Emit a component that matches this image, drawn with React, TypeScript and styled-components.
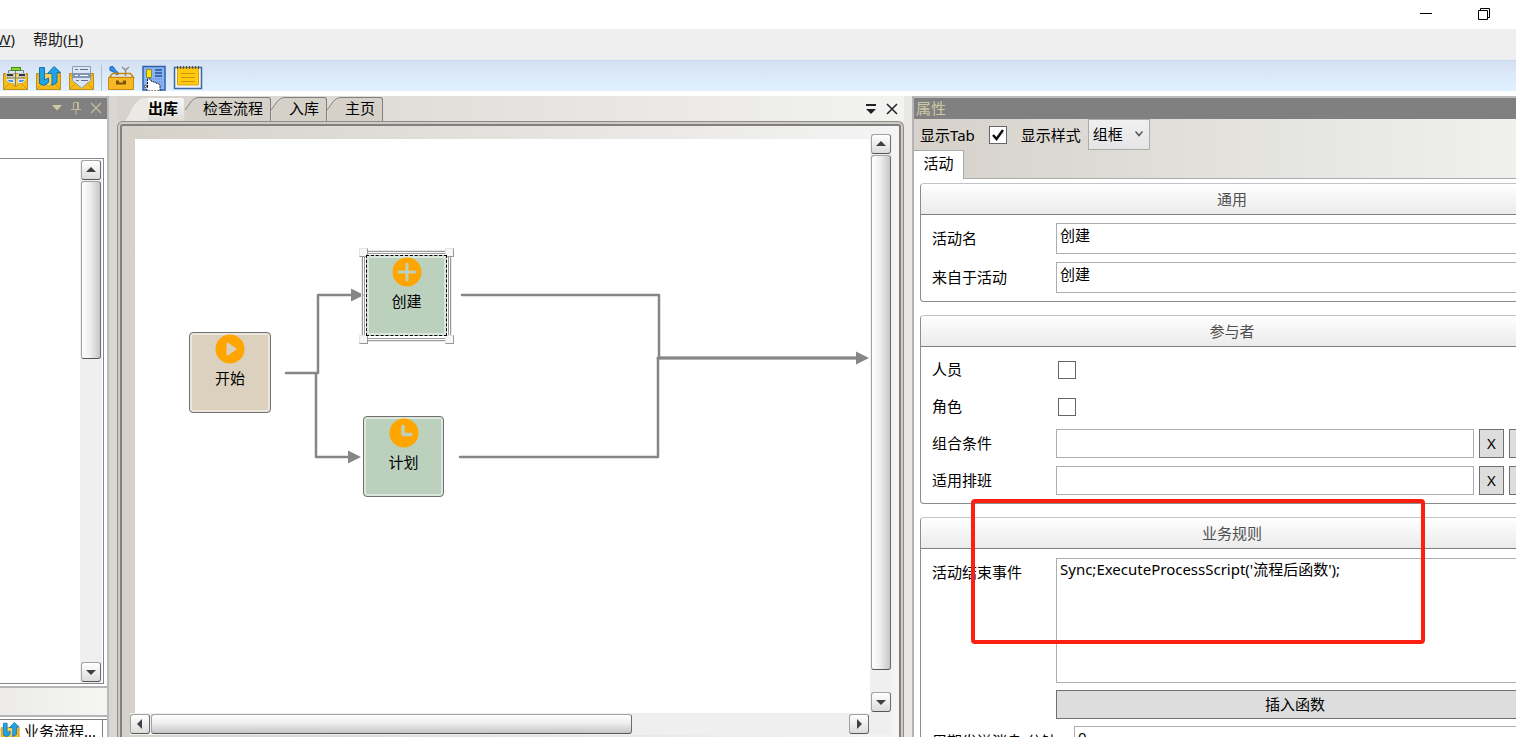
import React from "react";
import styled, { createGlobalStyle, css } from "styled-components";

const GlobalStyle = createGlobalStyle`
  * { box-sizing: border-box; }
  body { margin: 0; overflow: hidden; }
  body, button, input, select, textarea {
    font-family: "Noto Sans", "Noto Sans CJK SC", sans-serif;
    font-size: 15px;
    line-height: 20px;
    color: #000;
  }
`;

/* ---------- window frame ---------- */

const Window = styled.div`
  display: flex;
  flex-direction: column;
  height: 100vh;
  overflow: hidden;
  background: #fff;
  white-space: nowrap;
`;

const TitleBar = styled.header`
  display: flex;
  flex: none;
  justify-content: flex-end;
  gap: 34px;
  height: 29px;
  padding-right: 20px;
`;

const PlainButton = styled.button`
  display: flex;
  align-items: center;
  justify-content: center;
  padding: 0;
  border: 0;
  background: none;
`;

const WindowButton = styled(PlainButton)`
  width: 24px;
  height: 28px;
`;

const MenuBar = styled.nav`
  display: flex;
  flex: none;
  gap: 18px;
  height: 31px;
  background: #efefef;
`;

const MenuItem = styled(PlainButton)<{ $clipped?: boolean }>`
  justify-content: flex-end;
  width: ${(p) => (p.$clipped ? "15px" : "auto")};
  height: 20px;
  color: #222;
`;

const Toolbar = styled.div`
  display: flex;
  flex: none;
  align-items: flex-end;
  gap: 5px;
  height: 31px;
  padding-left: 2px;
  border-top: 1px solid #c6dcf5;
  background: linear-gradient(#d6e1f1, #e0f1ff);
`;

const ToolSeparator = styled.span`
  width: 1px;
  height: 26px;
  background: #b9bcc2;
`;

const Workspace = styled.main`
  display: flex;
  flex: 1;
  min-height: 0;
  margin-top: 5px;
  background: linear-gradient(90deg, #d5d1ca, #dad7d0 8%, #e8e7e4 60%, #f2f2f0);
`;

/* ---------- scroll bars ---------- */

type Axis = { $horizontal?: boolean };

const Track = styled.div<Axis>`
  display: flex;
  flex: none;
  flex-direction: ${(p) => (p.$horizontal ? "row" : "column")};
  padding: ${(p) => (p.$horizontal ? "1px 1px 1px 0" : "0 1px 1px 1px")};
  background: #efefef;
`;

const Groove = styled.div<Axis>`
  display: flex;
  flex: 1;
  min-width: 0;
  min-height: 0;
  flex-direction: ${(p) => (p.$horizontal ? "row" : "column")};
  padding: ${(p) => (p.$horizontal ? "0 1px" : "1px 0")};
`;

const edge = css`
  border: 1px solid;
  border-color: #a2a2a2 #6c6c6c #555 #a2a2a2;
  border-radius: 3px;
`;

const Thumb = styled.div<Axis & { $size: number }>`
  flex: 0 0 ${(p) => p.$size}%;
  ${edge}
  background: linear-gradient(${(p) => (p.$horizontal ? "180deg" : "90deg")}, #fff, #eee 45%, #c6c6c6);
`;

const ArrowButton = styled(PlainButton)`
  flex: none;
  width: 20px;
  height: 20px;
  ${edge}
  background: linear-gradient(#fff, #dcdcdc);
`;

const arrows = {
  up: "M0 7 L5 2 L10 7Z",
  down: "M0 3 L5 8 L10 3Z",
  left: "M7 0 L2 5 L7 10Z",
  right: "M3 0 L8 5 L3 10Z",
};

function ScrollArrow({ to, label }: { to: keyof typeof arrows; label: string }) {
  return (
    <ArrowButton aria-label={label}>
      <svg width="10" height="10"><path d={arrows[to]} fill="#404040" /></svg>
    </ArrowButton>
  );
}

function ScrollBar({ horizontal, size }: { horizontal?: boolean; size: number }) {
  return (
    <Track $horizontal={horizontal}>
      <ScrollArrow to={horizontal ? "left" : "up"} label={horizontal ? "向左" : "向上"} />
      <Groove $horizontal={horizontal}><Thumb $horizontal={horizontal} $size={size} /></Groove>
      <ScrollArrow to={horizontal ? "right" : "down"} label={horizontal ? "向右" : "向下"} />
    </Track>
  );
}

/* ---------- left dock ---------- */

const DockHeader = styled.div<{ $end?: boolean }>`
  display: flex;
  flex: none;
  align-items: center;
  justify-content: ${(p) => (p.$end ? "flex-end" : "flex-start")};
  gap: 8px;
  height: 23px;
  padding: 0 4px 2px 2px;
  border-top: 2px solid #bcbcbc;
  background: #808080;
  color: #cdc9a5;
`;

const LeftDock = styled.aside`
  display: flex;
  flex: none;
  flex-direction: column;
  width: 109px;
  border-right: 2px solid #b9babd;
  background: #fff;
`;

const TreeBox = styled.div`
  display: flex;
  flex: 1;
  justify-content: flex-end;
  min-height: 0;
  margin: 39px 3px 2px 0;
  padding: 1px 1px 0 0;
  border: 1px solid #828790;
  border-left: 0;
`;

const StatusStrip = styled.div`
  flex: none;
  height: 31px;
  border-top: 2px solid #b5b5b5;
  border-bottom: 2px solid #b5b5b5;
  background: linear-gradient(90deg, #ecebe9, #f5f5f4);
`;

const DockTabs = styled.div`
  flex: none;
  height: 18px;
  margin-top: 2px;
  overflow: hidden;
  border-top: 1px solid #808080;
`;

const DockTab = styled(PlainButton)`
  justify-content: flex-start;
  gap: 3px;
  width: 103px;
  height: 22px;
  border-right: 1px solid #808080;
`;

/* ---------- document area ---------- */

const Documents = styled.section`
  display: flex;
  flex: 1;
  flex-direction: column;
  min-width: 0;
  padding: 0 8px;
`;

const TabStrip = styled.div`
  display: flex;
  flex: none;
  align-items: flex-end;
  height: 25px;
  padding: 0 2px 0 8px;
  background: linear-gradient(90deg, #d6d2cb, #f3f3f2);
`;

const TabButton = styled.button<{ $active?: boolean }>`
  display: flex;
  height: 24px;
  padding: 0;
  border: 0;
  background: none;
  font-weight: ${(p) => (p.$active ? 700 : 400)};
`;

const TabFace = styled.span<{ $active?: boolean }>`
  height: 24px;
  padding-right: ${(p) => (p.$active ? 6 : 7)}px;
  border: solid ${(p) => (p.$active ? "transparent" : "#808080")};
  border-width: 1px 1px 0 0;
  border-radius: 0 3px 0 0;
  background: ${(p) => (p.$active ? "linear-gradient(#f8f8f7, #dedbd5)" : "#d5d1c9")};
  background-clip: padding-box;
`;

const TabSpacer = styled.span`
  flex: 1;
`;

const StripButton = styled(PlainButton)`
  width: 21px;
  height: 24px;
`;

const Frame = styled.div`
  display: flex;
  flex: 1;
  min-height: 0;
  padding: 2px 2px 0;
  border: 1px solid #8e8d8b;
  border-bottom: 0;
  border-radius: 6px 6px 0 0;
  background: #cfccc6;
`;

const Viewer = styled.div`
  display: grid;
  flex: 1;
  grid-template-rows: minmax(0, 1fr) 22px;
  grid-template-columns: minmax(0, 1fr) 22px;
  padding: 8px 7px 2px 8px;
  border: 2px solid #808080;
  border-bottom: 0;
  border-radius: 3px 3px 0 0;
  background: linear-gradient(90deg, #d5d1c9, #f4f4f4);
`;

const CanvasPane = styled.div`
  display: flex;
  padding: 5px 0 0 5px;
`;

const Canvas = styled.div`
  position: relative;
  flex: 1;
  overflow: hidden;
  background: #fff;
`;

const Corner = styled.div`
  background: #efefef;
`;

const Links = styled.svg`
  position: absolute;
  top: 0;
  left: 0;
`;

const Node = styled.button<{ $x: number; $y: number; $start?: boolean; $selected?: boolean }>`
  position: absolute;
  left: ${(p) => p.$x}px;
  top: ${(p) => p.$y}px;
  display: flex;
  flex-direction: column;
  align-items: center;
  gap: 4px;
  width: ${(p) => (p.$start ? 82 : 81)}px;
  height: 81px;
  padding: 1px 0 0;
  border: 1px ${(p) => (p.$selected ? "dashed #000" : "solid #707070")};
  border-radius: ${(p) => (p.$selected ? 0 : 4)}px;
  background: ${(p) => (p.$start ? "#dcd1be" : "#bbd1be")};
  box-shadow: inset 0 0 0 2px ${(p) => (p.$start ? "#ebe5db" : "#dbe7dc")};
`;

const Selection = styled.div`
  position: absolute;
  left: 227px;
  top: 112px;
  width: 89px;
  height: 90px;
  border: 3px double #999;
  box-shadow: 0 0 0 1px #e8e8e8;
`;

const Handle = styled.span<{ $right?: boolean; $bottom?: boolean }>`
  position: absolute;
  ${(p) => (p.$right ? "right" : "left")}: -6px;
  ${(p) => (p.$bottom ? "bottom" : "top")}: -6px;
  width: 9px;
  height: 9px;
  border: 1px solid;
  border-color: #e4e4e4 #999 #999 #e4e4e4;
  background: #f6f6f6;
`;

/* ---------- property dock ---------- */

const RightDock = styled.aside`
  display: flex;
  flex: none;
  flex-direction: column;
  width: 604px;
  overflow: hidden;
  border-left: 2px solid #b4b4b7;
  background: #fff;
`;

const PropertyTools = styled.div`
  flex: none;
  height: 60px;
  border-bottom: 1px solid #acacac;
  background: linear-gradient(90deg, #d6d1ca, #e2e1dc 50%, #f0f0ee);
`;

const OptionRow = styled.div`
  display: flex;
  align-items: center;
  height: 31px;
  padding-left: 6px;
`;

const Gap = styled.span`
  width: 12px;
`;

const CheckBox = styled.span`
  position: relative;
  display: block;
  width: 18px;
  height: 18px;
  margin: 0 2px;

  input {
    display: block;
    width: 18px;
    height: 18px;
    margin: 0;
    appearance: none;
    border: 1px solid #666;
    background: #fff;
  }
  svg {
    position: absolute;
    top: 0;
    left: 0;
    pointer-events: none;
    visibility: hidden;
  }
  input:checked + svg { visibility: visible; }
`;

const SelectBox = styled.span`
  position: relative;
  margin-left: 7px;

  select {
    display: block;
    width: 62px;
    height: 31px;
    padding: 0 4px 2px;
    appearance: none;
    border: 1px solid #acacac;
    border-radius: 0;
    background: linear-gradient(#f0f0f0, #e5e5e5);
  }
  svg {
    position: absolute;
    top: 12px;
    right: 7px;
    pointer-events: none;
  }
`;

const PropertyTab = styled(PlainButton)`
  width: 50px;
  height: 29px;
  padding-bottom: 4px;
  border: solid #acacac;
  border-width: 1px 1px 0 0;
  background: #fff;
`;

const Groups = styled.div`
  display: flex;
  flex: 1;
  flex-direction: column;
  gap: 13px;
  min-height: 0;
  margin-right: -28px;
  padding: 4px 0 0 6px;
`;

const Group = styled.section`
  position: relative;
  flex: none;
  border: 1px solid #8c8c8c;
  border-top-color: #c4c4c4;
  border-radius: 4px;
`;

const GroupTitle = styled.h2`
  display: flex;
  align-items: center;
  justify-content: center;
  height: 31px;
  margin: 0;
  border-bottom: 1px solid #808080;
  border-radius: 3px 3px 0 0;
  background: linear-gradient(#fff, #ebebeb);
  color: #505050;
  font-size: 15px;
  font-weight: 400;
`;

const Rows = styled.div<{ $loose?: boolean }>`
  display: flex;
  flex-direction: column;
  gap: ${(p) => (p.$loose ? 8 : 7)}px;
  padding: ${(p) => (p.$loose ? "8px 9px 8px 11px" : "9px 9px 9px 11px")};
`;

const Row = styled.div<{ $top?: boolean }>`
  display: flex;
  align-items: ${(p) => (p.$top ? "flex-start" : "center")};
  gap: 5px;
  min-height: 29px;
`;

const FieldLabel = styled.label<{ $auto?: boolean; $top?: boolean }>`
  flex: none;
  width: ${(p) => (p.$auto ? "137px" : "119px")};
  padding: ${(p) => (p.$top ? "4px 0 0" : "0 0 2px")};
`;

const TextField = styled.input<{ $tall?: boolean }>`
  flex: 1;
  min-width: 0;
  height: ${(p) => (p.$tall ? 31 : 29)}px;
  padding: ${(p) => (p.$tall ? "0 3px 9px" : "0 3px")};
  border: 1px solid #abadb3;
  background: #fff;
`;

const TextArea = styled.textarea`
  flex: 1;
  min-width: 0;
  height: 125px;
  padding: 0 3px;
  resize: none;
  border: 1px solid #abadb3;
`;

const GrayButton = styled.button<{ $wide?: boolean }>`
  flex: ${(p) => (p.$wide ? "1" : "none")};
  width: 25px;
  height: 29px;
  padding: 0 0 2px;
  border: 1px solid #707070;
  background: #ddd;
`;

const Highlight = styled.div`
  position: absolute;
  top: -19px;
  left: 50px;
  width: 454px;
  height: 145px;
  border: 4px solid #fd2012;
  border-radius: 4px;
  pointer-events: none;
`;

/* ---------- drawings ---------- */

const Envelope = () => (
  <>
    <path d="M1.500 8.500h24v16h-24z" fill="#f5bc16" stroke="#c58c18" />
    <path d="M2 9l11.500 13L25 9" fill="#f8d35a" stroke="#c99a2c" />
    <path d="M2 24l8-8M25 24l-8-8" stroke="#d29a18" fill="none" />
  </>
);

const FlowIcon = () => (
  <svg width="28" height="26" display="block">
    <Envelope />
    <path d="M6.500 8V5.500h15V8M13.500 5v16M5 13h18" stroke="#73808b" fill="none" />
    <rect x="9.500" y="2.500" width="9" height="3" fill="#8bd82a" stroke="#4b8a16" />
    <rect x="4.500" y="8.500" width="7" height="3" fill="#35373c" stroke="#c3c7ce" />
    <rect x="16.500" y="8.500" width="7" height="3" fill="#35373c" stroke="#c3c7ce" />
    <path d="M4.500 14.500h7v3h-4zM16.500 14.500h7l-3 3h-4z" fill="#4b97ec" stroke="#dcecff" />
  </svg>
);

const SwapIcon = ({ size = 28 }: { size?: number }) => (
  <svg width={size} height={size === 28 ? 26 : 20} viewBox="0 0 28 26" display="block">
    <Envelope />
    <path d="M4.500 2.500h5V15l4-2v4.500L9 20.500l-4.500-2z" fill="#22a3e8" stroke="#1274ad" />
    <path d="M12.500 8.500l6.500-7 6.500 6h-3.500v10l-5 3v-12z" fill="#22a3e8" stroke="#1274ad" />
  </svg>
);

const FormIcon = () => (
  <svg width="28" height="26" display="block">
    <Envelope />
    <path d="M4.500 1.500h18v14L13.500 23l-9-7.500z" fill="#dce6f3" stroke="#8b9dbb" />
    <path d="M4 8h19v5H4z" fill="#8295b4" />
    <path d="M7 4.500h3m2 0h8M8 15.500h3m2 0h7" stroke="#5a6f93" />
    <path d="M7 10.500h3m2 0h8" stroke="#fff" />
  </svg>
);

const ToolboxIcon = () => (
  <svg width="29" height="26" display="block">
    <path d="M3 2l3-.500 2 3 4 4-2 1.500-4-3.500-3-1z" fill="#2f8ef0" stroke="#1a62b5" />
    <path d="M15 2l3.500 3L22 2M18.500 5v6" stroke="#8d8d8d" strokeWidth="1.500" fill="none" />
    <path d="M2.500 12.500l3-4h18l3 4z" fill="none" stroke="#c8870e" strokeWidth="1.500" />
    <path d="M1.500 12.500h25v12h-25z" fill="#f6b824" stroke="#c98a12" />
    <path d="M9 15.500h3v2h4v-2h3v4H9z" fill="#7a5208" />
  </svg>
);

const DesignIcon = () => (
  <svg width="27" height="26" display="block">
    <path d="M2 1.500h22V25H2z" fill="#86b4f5" stroke="#3660a8" strokeWidth="1.500" />
    <path d="M5.500 4.500h5v8h-5z" fill="#ffe400" stroke="#8a8a40" />
    <path d="M14 5h7M14 8h7M14 11h7" stroke="#2d4f94" strokeWidth="1.500" />
    <path d="M12 14h10M14 17h8M16 20h6" stroke="#5c7fd0" strokeDasharray="1 1" />
    <path d="M6.500 14v9l-2-3-1.500 1 4 5h12v-6l-2-1.500-2-.500-2-1-2-.500-1-.500V14z" fill="#fff" stroke="#111" strokeDasharray="2 1" />
  </svg>
);

const NoteIcon = () => (
  <svg width="31" height="26" display="block">
    <path d="M1.500 2.500h27v21h-27z" fill="#eef4fc" stroke="#3f679f" strokeWidth="1.500" />
    <path d="M4.500 3h21v17h-21z" fill="#ffc90e" stroke="#e0a20b" />
    <path d="M4 2.500h23" stroke="#5c5540" strokeWidth="3" strokeDasharray="1 2" />
    <path d="M8 8.500h14M8 12.500h14M8 16.500h14" stroke="#cf9412" />
  </svg>
);

const PlayMark = () => <path d="M12.500 9.500v11l8-5.500z" fill="#dcd1be" stroke="#dcd1be" strokeWidth="2" strokeLinejoin="round" />;
const PlusMark = () => <path d="M15 7v16M7 15h16" stroke="#bbd1be" strokeWidth="3" strokeLinecap="round" />;
const ClockMark = () => <path d="M14 8.500v8h8" stroke="#bbd1be" strokeWidth="3.500" strokeLinecap="round" strokeLinejoin="round" fill="none" />;

function Badge({ children }: { children: React.ReactNode }) {
  return (
    <svg width="30" height="30">
      <circle cx="15" cy="15" r="14.500" fill="#ffa500" />
      {children}
    </svg>
  );
}

function DocTab({ title, active }: { title: string; active?: boolean }) {
  return (
    <TabButton $active={active}>
      <svg width={active ? 23 : 18} height="24">
        {active ? (
          <path d="M0 24C6 18 8 1 21 1H23V24Z" fill="#ebe9e6" />
        ) : (
          <>
            <path d="M1 24V12C5 6 7 .5 14 .5H18V24Z" fill="#d5d1c9" />
            <path d="M0 13C5 7 7 .5 14 .5H18" fill="none" stroke="#808080" />
          </>
        )}
      </svg>
      <TabFace $active={active}>{title}</TabFace>
    </TabButton>
  );
}

function Check({ id, checked }: { id: string; checked?: boolean }) {
  return (
    <CheckBox>
      <input type="checkbox" id={id} defaultChecked={checked} />
      <svg width="18" height="18"><path d="M4 9l3.500 4L14 4" fill="none" stroke="#111" strokeWidth="2.500" /></svg>
    </CheckBox>
  );
}

function PickerRow({ id, label }: { id: string; label: string }) {
  return (
    <Row>
      <FieldLabel htmlFor={id}>{label}</FieldLabel>
      <TextField id={id} />
      <GrayButton>X</GrayButton>
      <GrayButton aria-label="选择" />
    </Row>
  );
}

export default function App() {
  return (
    <Window>
      <GlobalStyle />
      <TitleBar>
        <WindowButton aria-label="最小化">
          <svg width="12" height="12"><path d="M0 5.500h12" stroke="#000" /></svg>
        </WindowButton>
        <WindowButton aria-label="还原">
          <svg width="12" height="12" fill="none" stroke="#000">
            <path d="M.5 2.500h9v9h-9zM2.500 2.500v-2h9v9h-2" />
          </svg>
        </WindowButton>
      </TitleBar>

      <MenuBar>
        <MenuItem $clipped><u>W</u>)</MenuItem>
        <MenuItem>帮助(<u>H</u>)</MenuItem>
      </MenuBar>

      <Toolbar>
        <PlainButton aria-label="流程"><FlowIcon /></PlainButton>
        <PlainButton aria-label="业务流程"><SwapIcon /></PlainButton>
        <PlainButton aria-label="表单"><FormIcon /></PlainButton>
        <ToolSeparator />
        <PlainButton aria-label="工具箱"><ToolboxIcon /></PlainButton>
        <PlainButton aria-label="设计"><DesignIcon /></PlainButton>
        <PlainButton aria-label="记事"><NoteIcon /></PlainButton>
      </Toolbar>

      <Workspace>
        <LeftDock>
          <DockHeader $end>
            <PlainButton aria-label="菜单">
              <svg width="12" height="12"><path d="M1 3h10L6 8.500z" fill="#cdc9a5" /></svg>
            </PlainButton>
            <PlainButton aria-label="固定">
              <svg width="10" height="14" fill="none" stroke="#bdb998">
                <path d="M2.500 8V1.500h5V8M0 8.500h10M6.500 2v6M5 9v5" />
              </svg>
            </PlainButton>
            <PlainButton aria-label="关闭">
              <svg width="14" height="12"><path d="M2 1l10 10M12 1L2 11" stroke="#bdb998" strokeWidth="1.500" /></svg>
            </PlainButton>
          </DockHeader>
          <TreeBox><ScrollBar size={37} /></TreeBox>
          <StatusStrip />
          <DockTabs>
            <DockTab><SwapIcon size={21} />业务流程...</DockTab>
          </DockTabs>
        </LeftDock>

        <Documents>
          <TabStrip>
            <DocTab title="出库" active />
            <DocTab title="检查流程" />
            <DocTab title="入库" />
            <DocTab title="主页" />
            <TabSpacer />
            <StripButton aria-label="文档列表">
              <svg width="12" height="12"><path d="M1 2h10" stroke="#222" strokeWidth="2" /><path d="M1 6h10L6 11z" fill="#222" /></svg>
            </StripButton>
            <StripButton aria-label="关闭文档">
              <svg width="12" height="12"><path d="M1 1l10 10M11 1L1 11" stroke="#222" strokeWidth="1.500" /></svg>
            </StripButton>
          </TabStrip>
          <Frame>
            <Viewer>
              <CanvasPane>
                <Canvas>
                  <Links width="735" height="340" fill="none" stroke="#868686" strokeWidth="2.500" strokeLinecap="round" strokeLinejoin="round">
                    <path d="M151 234H183V156H217M181 235V318H214M151 234H183" />
                    <path d="M327 156H524V219M325 318H523V219H722" />
                    <path d="M523 219H722" strokeWidth="3" />
                    <g fill="#868686" stroke="none">
                      <path d="M216 149.500l13 6.500-13 6.500zM213 311.500l13 6.500-13 6.500zM721 212.500l13 6.500-13 6.500z" />
                    </g>
                  </Links>
                  <Node $x={54} $y={193} $start><Badge><PlayMark /></Badge>开始</Node>
                  <Node $x={228} $y={277}><Badge><ClockMark /></Badge>计划</Node>
                  <Selection>
                    <Handle />
                    <Handle $right />
                    <Handle $bottom />
                    <Handle $right $bottom />
                  </Selection>
                  <Node $x={231} $y={116} $selected><Badge><PlusMark /></Badge>创建</Node>
                </Canvas>
              </CanvasPane>
              <ScrollBar size={96} />
              <ScrollBar horizontal size={69} />
              <Corner />
            </Viewer>
          </Frame>
        </Documents>

        <RightDock>
          <DockHeader>属性</DockHeader>
          <PropertyTools>
            <OptionRow>
              <label htmlFor="showTab">显示Tab</label>
              <Gap />
              <Check id="showTab" checked />
              <Gap />
              <label htmlFor="showStyle">显示样式</label>
              <SelectBox>
                <select id="showStyle" defaultValue="组框"><option>组框</option></select>
                <svg width="8" height="6"><path d="M.5.500L4 4.500 7.500.500" fill="none" stroke="#555" strokeWidth="1.500" /></svg>
              </SelectBox>
            </OptionRow>
            <PropertyTab>活动</PropertyTab>
          </PropertyTools>

          <Groups>
            <Group>
              <GroupTitle>通用</GroupTitle>
              <Rows $loose>
                <Row>
                  <FieldLabel htmlFor="name">活动名</FieldLabel>
                  <TextField id="name" $tall defaultValue="创建" />
                </Row>
                <Row>
                  <FieldLabel htmlFor="source">来自于活动</FieldLabel>
                  <TextField id="source" $tall defaultValue="创建" />
                </Row>
              </Rows>
            </Group>

            <Group>
              <GroupTitle>参与者</GroupTitle>
              <Rows $loose>
                <Row>
                  <FieldLabel htmlFor="person">人员</FieldLabel>
                  <Check id="person" />
                </Row>
                <Row>
                  <FieldLabel htmlFor="role">角色</FieldLabel>
                  <Check id="role" />
                </Row>
                <PickerRow id="condition" label="组合条件" />
                <PickerRow id="shift" label="适用排班" />
              </Rows>
            </Group>

            <Group>
              <GroupTitle>业务规则</GroupTitle>
              <Rows>
                <Row $top>
                  <FieldLabel htmlFor="endEvent" $top>活动结束事件</FieldLabel>
                  <TextArea id="endEvent" defaultValue="Sync;ExecuteProcessScript('流程后函数');" />
                </Row>
                <Row>
                  <FieldLabel as="span" />
                  <GrayButton $wide>插入函数</GrayButton>
                </Row>
                <Row>
                  <FieldLabel htmlFor="period" $auto>周期发送消息(分钟):</FieldLabel>
                  <TextField id="period" $tall defaultValue="0" />
                </Row>
              </Rows>
              <Highlight />
            </Group>
          </Groups>
        </RightDock>
      </Workspace>
    </Window>
  );
}
